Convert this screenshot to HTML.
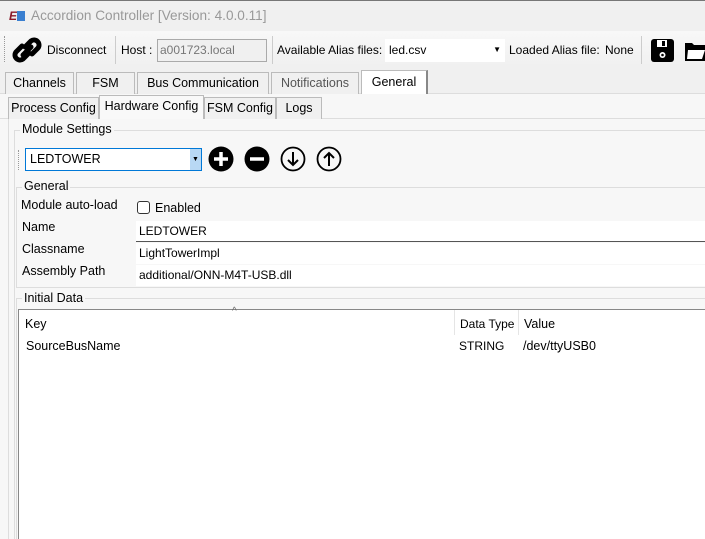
<!DOCTYPE html>
<html><head><style>
*{margin:0;padding:0;box-sizing:border-box}
body{width:705px;height:539px;overflow:hidden;background:#f0f0f0;font-family:"Liberation Sans",sans-serif;font-size:12px;color:#000;position:relative}
.a{position:absolute;white-space:nowrap}
.tab{position:absolute;border:1px solid #bbb;border-bottom:none;background:#f0f0f0;text-align:center;line-height:20px;font-size:12.5px}
.in{position:absolute;background:#fff;padding-left:3px;line-height:21px}
</style></head><body>
<div class="a" style="left:0;top:0;width:705px;height:1px;background:#777"></div>
<div class="a" style="left:8px;top:8px;width:17px;height:17px">
<span style="position:absolute;left:1px;top:1px;color:#8b1a2a;font-weight:bold;font-size:12px;font-style:italic">E</span>
<span style="position:absolute;left:9px;top:3px;width:8px;height:10px;background:#3a7fd0"></span></div>
<div class="a" style="left:31px;top:8px;color:#999;font-size:13.6px">Accordion Controller [Version: 4.0.0.11]</div>
<div class="a" style="left:0;top:31px;width:705px;height:36px;background:linear-gradient(#f8f8f8,#f0f0f0)"></div>
<div class="a" style="left:4px;top:36px;width:1px;height:26px;border-left:1px dotted #999"></div>
<svg class="a" style="left:10px;top:34px" width="34" height="32" viewBox="0 0 34 32"><g fill="none" stroke="#000" stroke-width="5" stroke-linecap="round"><path d="M15 13 L21 7 a5 5 0 0 1 7 7 L22 20"/><path d="M19 19 L13 25 a5 5 0 0 1 -7 -7 L12 12"/><path d="M13 21 L21 13"/></g></svg>
<div class="a" style="left:47px;top:43px;font-size:12px">Disconnect</div>
<div class="a" style="left:115px;top:36px;width:1px;height:28px;background:#ccc"></div>
<div class="a" style="left:121px;top:43px;font-size:12px">Host :</div>
<div class="a" style="left:157px;top:39px;width:110px;height:23px;border:1px solid #aaa;background:#f0f0f0;color:#777;padding-left:2px;line-height:21px;font-size:12px">a001723.local</div>
<div class="a" style="left:272px;top:36px;width:1px;height:28px;background:#ccc"></div>
<div class="a" style="left:277px;top:43px;font-size:12px">Available Alias files:</div>
<div class="a" style="left:385px;top:39px;width:120px;height:23px;background:#fff;padding-left:4px;line-height:22px;font-size:12px">led.csv<span style="position:absolute;right:4px;top:0;font-size:8px">▼</span></div>
<div class="a" style="left:509px;top:43px;font-size:12px">Loaded Alias file:</div>
<div class="a" style="left:605px;top:43px;font-size:12px">None</div>
<div class="a" style="left:641px;top:36px;width:1px;height:28px;background:#ccc"></div>
<svg class="a" style="left:651px;top:39px" width="24" height="24"><rect x="0" y="0" width="23" height="23" rx="3" fill="#000"/><rect x="6" y="1" width="10" height="7" fill="#fff"/><rect x="11" y="2" width="3" height="5" fill="#000"/><circle cx="11.5" cy="16" r="3" fill="#fff"/><circle cx="11.5" cy="16" r="1.3" fill="#000"/></svg>
<svg class="a" style="left:684px;top:40px" width="21" height="22"><path d="M1 3 h7 l2 2 h11 v16 h-20 z" fill="#000"/><path d="M4 10 h17 l-3 9 h-15 z" fill="#fff"/></svg>
<div class="a" style="left:0;top:93px;width:705px;height:1px;background:#ddd"></div>
<div class="tab" style="left:5px;top:72px;width:69px;height:22px">Channels</div>
<div class="tab" style="left:76px;top:72px;width:59px;height:22px">FSM</div>
<div class="tab" style="left:137px;top:72px;width:132px;height:22px">Bus Communication</div>
<div class="tab" style="left:271px;top:72px;width:88px;height:22px;color:#555">Notifications</div>
<div class="tab" style="left:361px;top:70px;width:67px;height:25px;background:#fff;line-height:22px;border-right:2px solid #888">General</div>
<div class="a" style="left:0;top:94px;width:705px;height:445px;background:#f7f7f7"></div>
<div class="a" style="left:0;top:118px;width:705px;height:1px;background:#ddd"></div>
<div class="tab" style="left:8px;top:97px;width:91px;height:22px">Process Config</div>
<div class="tab" style="left:99px;top:95px;width:105px;height:24px;background:#f9f9f9;line-height:20px">Hardware Config</div>
<div class="tab" style="left:204px;top:97px;width:72px;height:22px">FSM Config</div>
<div class="tab" style="left:276px;top:97px;width:46px;height:22px">Logs</div>
<div class="a" style="left:8px;top:119px;width:1px;height:420px;background:#ddd"></div>
<div class="a" style="left:14px;top:130px;width:691px;height:409px;border:1px solid #ddd;border-right:none;border-bottom:none"></div>
<div class="a" style="left:20px;top:122px;background:#f7f7f7;padding:0 2px;font-size:12.5px">Module Settings</div>
<div class="a" style="left:18px;top:150px;width:1px;height:20px;border-left:1px dotted #999"></div>
<div class="a" style="left:25px;top:148px;width:177px;height:23px;border:1px solid #0078d7;background:#fff;padding-left:4px;line-height:21px;font-size:12.5px">LEDTOWER<span style="position:absolute;right:0;top:0;width:11px;height:21px;background:#b8d8f4;font-size:7px;text-align:center;line-height:21px">▼</span></div>
<svg class="a" style="left:208px;top:146px" width="140" height="27">
<circle cx="13" cy="13" r="12.5" fill="#000"/><path d="M13 6v14M6 13h14" stroke="#fff" stroke-width="3.5"/>
<circle cx="49" cy="13" r="12.5" fill="#000"/><path d="M42 13h14" stroke="#fff" stroke-width="3.5"/>
<circle cx="85" cy="13" r="11.5" fill="none" stroke="#000" stroke-width="1.8"/><path d="M85 6v13M80 14l5 5 5-5" fill="none" stroke="#000" stroke-width="2"/>
<circle cx="121" cy="13" r="11.5" fill="none" stroke="#000" stroke-width="1.8"/><path d="M121 20v-13M116 12l5-5 5 5" fill="none" stroke="#000" stroke-width="2"/>
</svg>
<div class="a" style="left:16px;top:187px;width:689px;height:101px;border:1px solid #ddd;border-right:none"></div>
<div class="a" style="left:22px;top:179px;background:#f7f7f7;padding:0 2px;font-size:12.5px">General</div>
<div class="a" style="left:21px;top:198px;font-size:12.5px">Module auto-load</div>
<div class="a" style="left:137px;top:201px;width:13px;height:13px;border:1px solid #333;border-radius:3px;background:#fff"></div>
<div class="a" style="left:155px;top:201px;font-size:12.5px">Enabled</div>
<div class="a" style="left:22px;top:220px;font-size:12.5px">Name</div>
<div class="a" style="left:22px;top:242px;font-size:12.5px">Classname</div>
<div class="a" style="left:22px;top:264px;font-size:12.5px">Assembly Path</div>
<div class="in" style="left:136px;top:221px;width:569px;height:21px;border-bottom:1px solid #555">LEDTOWER</div>
<div class="in" style="left:136px;top:243px;width:569px;height:21px">LightTowerImpl</div>
<div class="in" style="left:136px;top:265px;width:569px;height:21px">additional/ONN-M4T-USB.dll</div>
<div class="a" style="left:16px;top:298px;width:689px;height:241px;border-top:1px solid #ddd;border-left:1px solid #ddd"></div>
<div class="a" style="left:22px;top:291px;background:#f7f7f7;padding:0 2px;font-size:12.5px">Initial Data</div>
<div class="a" style="left:18px;top:309px;width:687px;height:230px;background:#fff;border-top:1px solid #888;border-left:1px solid #888"></div>
<div class="a" style="left:232px;top:306px;font-size:10px;color:#666">^</div>
<div class="a" style="left:454px;top:310px;width:1px;height:25px;background:#e5e5e5"></div>
<div class="a" style="left:518px;top:310px;width:1px;height:25px;background:#e5e5e5"></div>
<div class="a" style="left:25px;top:317px;font-size:12.5px">Key</div>
<div class="a" style="left:460px;top:317px;font-size:12px">Data Type</div>
<div class="a" style="left:524px;top:317px;font-size:12.5px">Value</div>
<div class="a" style="left:26px;top:339px;font-size:12.5px">SourceBusName</div>
<div class="a" style="left:459px;top:339px;font-size:12px">STRING</div>
<div class="a" style="left:523px;top:339px;font-size:12.5px">/dev/ttyUSB0</div>
</body></html>
